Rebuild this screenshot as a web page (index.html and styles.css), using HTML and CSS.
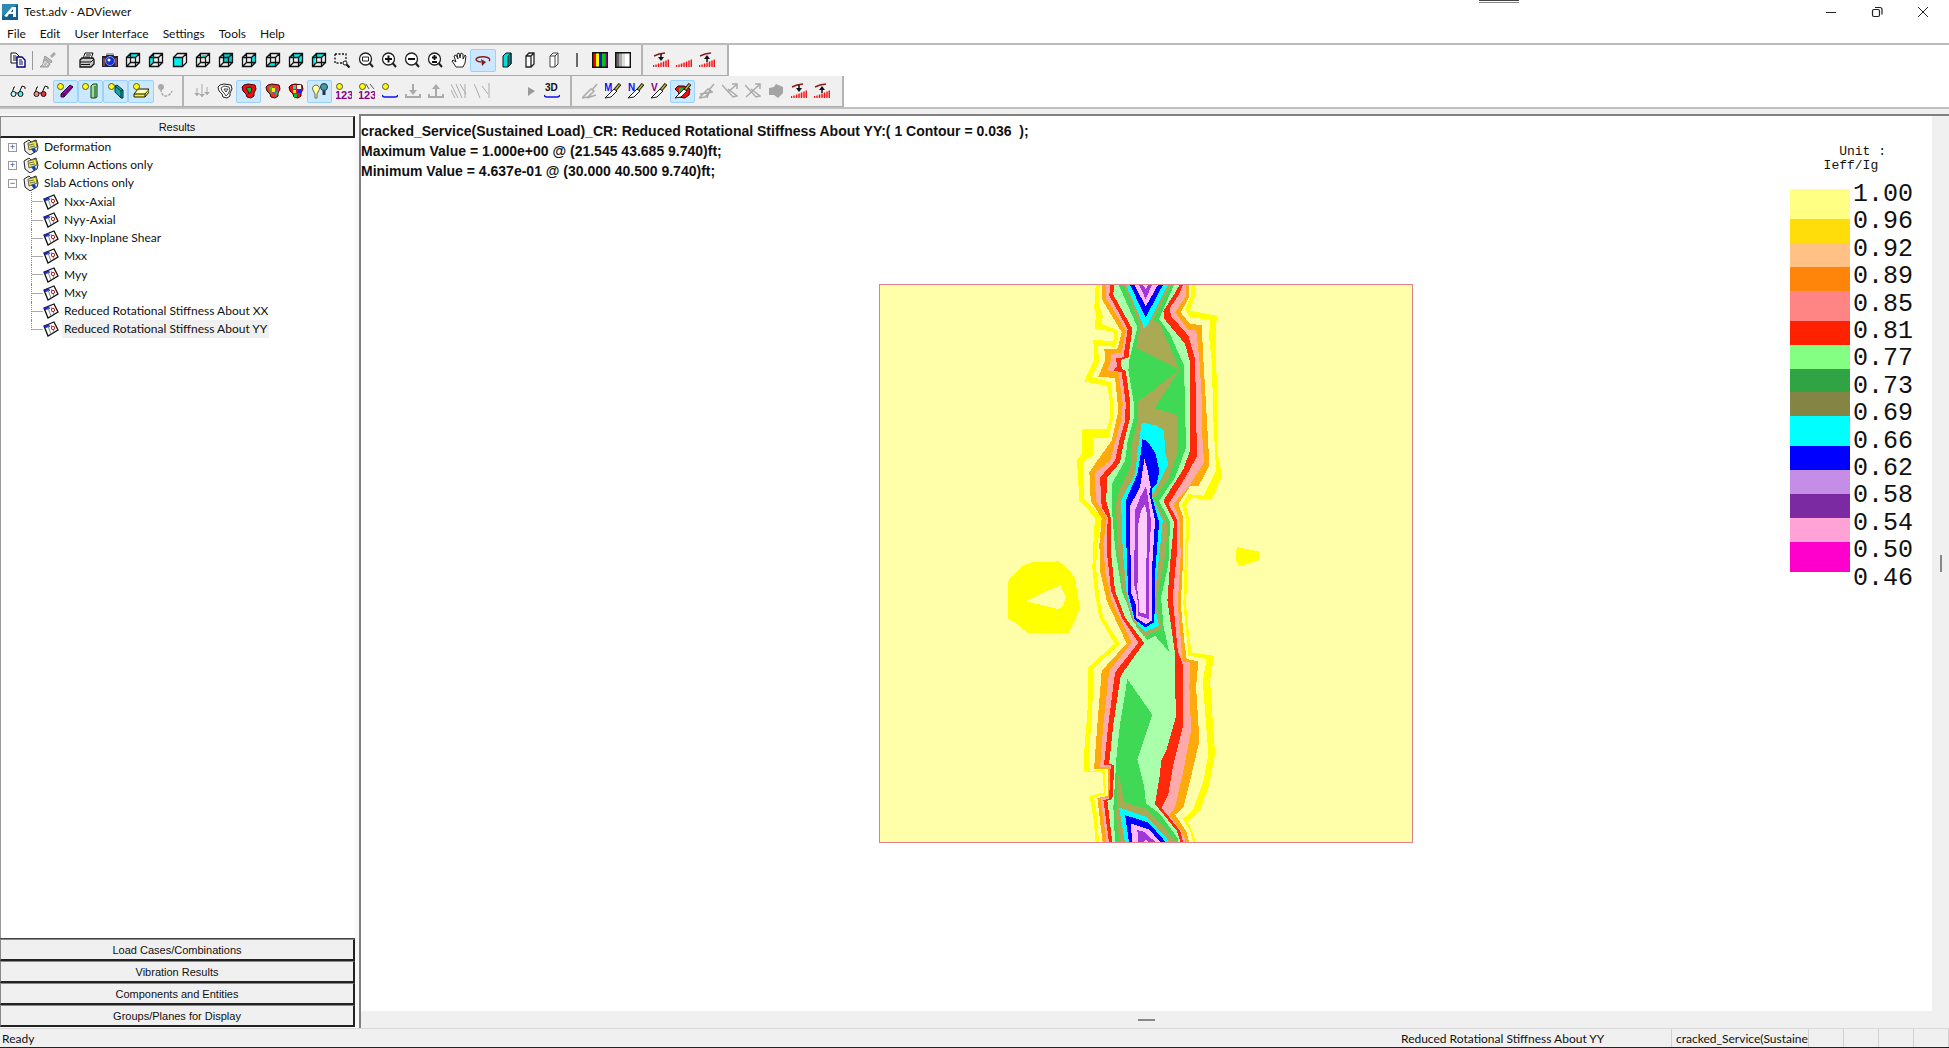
FILE: index.html
```html
<!DOCTYPE html>
<html lang="en">
<head>
<meta charset="utf-8">
<title>Test.adv - ADViewer</title>
<link rel="stylesheet" href="styles.css">
</head>
<body>
<svg class="sprite" aria-hidden="true">
  <symbol id="wire" viewBox="0 0 16 16"><path d="M1.500 5.500h9v9h-9zM5.500 1.500h9v9h-9zM1.500 5.500l4-4M10.500 5.500l4-4M10.500 14.500l4-4M1.500 14.500l4-4" fill="none" stroke="#111" stroke-width="1.300"/></symbol>
  <symbol id="i-copy" viewBox="0 0 16 16"><path d="M1 1h5l3 3v7H1z" fill="#fff" stroke="#111"/><path d="M3 4h3M3 6h4M3 8h4" stroke="#111"/><path d="M7 5h5l3 3v7H7z" fill="#fff" stroke="#00007a" stroke-width="1.400"/><path d="M9 8h3M9 10h4M9 12h4" stroke="#00007a"/></symbol>
  <symbol id="i-brush" viewBox="0 0 16 16"><path d="M15 1l-4 4" stroke="#aaa" stroke-width="3"/><path d="M5 4l7 5-1 2-7-5zM4 7l6 5-2 3H0l3-3z" fill="#bbb" stroke="#999"/><path d="M3 13l3-4M6 14l2-3" stroke="#eee"/></symbol>
  <symbol id="i-print" viewBox="0 0 16 16"><path d="M4 7l2-6h8l-2 6z" fill="#fff" stroke="#111"/><path d="M7 3h5M6 5h5" stroke="#111"/><path d="M1 8l2-2h11l1 2v4l-3 3H1z" fill="#ccc" stroke="#111" stroke-width="1.300"/><path d="M1 10h11l3-3M2 12.500h9" fill="none" stroke="#111"/><path d="M9 11.500h2" stroke="#cc0"/></symbol>
  <symbol id="i-camera" viewBox="0 0 16 16"><path d="M0 4h4l1-3h6l1 3h4v11H0z" fill="#223"/><path d="M5 1h6v2H5z" fill="#aaa"/><path d="M1 6h2v8H1zM13 6h2v8h-2z" fill="#844"/><circle cx="8" cy="9" r="4.500" fill="#1230d0" stroke="#79f"/><circle cx="7" cy="8" r="1.500" fill="#fff"/></symbol>
  <symbol id="i-c1" viewBox="0 0 16 16"><path d="M1 5l4-4h9l-4 4z" fill="#0ee"/><use href="#wire"/></symbol>
  <symbol id="i-c2" viewBox="0 0 16 16"><path d="M1 5l4-4v9l-4 4z" fill="#0ee"/><use href="#wire"/></symbol>
  <symbol id="i-c3" viewBox="0 0 16 16"><path d="M1 5h10v9H1z" fill="#0ee"/><path d="M1.500 5.500h9v9h-9zM1.500 5.500l4-4h9v9l-4 4M10.500 5.500l4-4" fill="none" stroke="#111" stroke-width="1.300"/></symbol>
  <symbol id="i-c4" viewBox="0 0 16 16"><path d="M7 3h4v3H7z" fill="#0ee"/><use href="#wire"/></symbol>
  <symbol id="i-c5" viewBox="0 0 16 16"><path d="M5 1h9v9H5z" fill="#0cc"/><use href="#wire"/></symbol>
  <symbol id="i-c6" viewBox="0 0 16 16"><path d="M11 5l4-4v9l-4 4z" fill="#0ee"/><use href="#wire"/></symbol>
  <symbol id="i-c7" viewBox="0 0 16 16"><path d="M1 14l4-4h9l-4 4z" fill="#0ee"/><use href="#wire"/></symbol>
  <symbol id="i-c8" viewBox="0 0 16 16"><path d="M1 5l4-4h9v9l-4 4V5z" fill="#0ee"/><use href="#wire"/></symbol>
  <symbol id="i-c9" viewBox="0 0 16 16"><path d="M1 5l4-4h9l-4 4zM1 5h3v9H1z" fill="#0ee"/><use href="#wire"/></symbol>
  <symbol id="i-sel" viewBox="0 0 16 16"><path d="M1 2h11v7M1 2v9h7" fill="none" stroke="#111" stroke-width="1.300" stroke-dasharray="2 1.500"/><circle cx="11" cy="11" r="2" fill="#fff" stroke="#111"/><path d="M12.500 12.500l3 3" stroke="#111" stroke-width="2"/></symbol>
  <symbol id="lens" viewBox="0 0 16 16"><circle cx="7.500" cy="7" r="6" fill="#fff" stroke="#222" stroke-width="1.300"/><path d="M11.500 11l3.500 4" stroke="#222" stroke-width="2"/></symbol>
  <symbol id="i-z1" viewBox="0 0 16 16"><use href="#lens"/><path d="M4.500 5h6v4h-6z" fill="#fff" stroke="#222"/></symbol>
  <symbol id="i-z2" viewBox="0 0 16 16"><use href="#lens"/><path d="M4 7h7M7.500 3.500v7" stroke="#111" stroke-width="2"/></symbol>
  <symbol id="i-z3" viewBox="0 0 16 16"><use href="#lens"/><path d="M4 7h7" stroke="#111" stroke-width="2"/></symbol>
  <symbol id="i-z4" viewBox="0 0 16 16"><use href="#lens"/><path d="M5 5.500h5M7.500 3v5M5 10h5" stroke="#111" stroke-width="1.800"/></symbol>
  <symbol id="i-hand" viewBox="0 0 16 16"><path d="M5 15l-4-6 1-1 3 2-2-6 2-1 2 4-1-5 2-1 1 5 1-5 2 1v5l2-4 1 1-1 7-2 4z" fill="#fff" stroke="#222"/></symbol>
  <symbol id="i-rot" viewBox="0 0 16 16"><path d="M14 9c3-3-4-5-9-4s-6 4 1 5" fill="none" stroke="#8b1a1a" stroke-width="1.400"/><path d="M6 7l5 3-4 4z" fill="#8b1a1a"/></symbol>
  <symbol id="i-b1" viewBox="0 0 16 16"><path d="M4 4l3-3h5v11l-3 3H4z" fill="#0dd" stroke="#111"/><path d="M9 4l3-3v11l-3 3z" fill="#088" stroke="#111"/></symbol>
  <symbol id="i-b2" viewBox="0 0 16 16"><path d="M4 4l3-3h5v11l-3 3H4zM4 4h5l3-3M9 4v11" fill="#fff" stroke="#222" stroke-width="1.300"/></symbol>
  <symbol id="i-b3" viewBox="0 0 16 16"><path d="M4 4l3-3h5v11l-3 3H4zM4 4h5l3-3M9 4v11" fill="#fff" stroke="#444"/></symbol>
  <symbol id="i-line" viewBox="0 0 16 16"><path d="M8 1v14" stroke="#222" stroke-width="1.300"/></symbol>
  <symbol id="i-bars" viewBox="0 0 16 16"><path d="M1 1h14v14H1z" fill="#ff0"/><path d="M1 1h3v14H1z" fill="#f00"/><path d="M7 1h3v14H7z" fill="#11f"/><path d="M10 1h3v14h-3z" fill="#0c0"/><path d="M13 1h2v14h-2z" fill="#e0e"/><path d="M.7.7h14.600v14.600H.7z" fill="none" stroke="#111" stroke-width="1.400"/></symbol>
  <symbol id="i-grays" viewBox="0 0 16 16"><path d="M1 1h14v14H1z" fill="#fff"/><path d="M1 1h3v14H1z" fill="#666"/><path d="M4 1h3v14H4z" fill="#aaa"/><path d="M7 1h3v14H7z" fill="#ddd"/><path d="M.7.700h14.600v14.600H.7z" fill="none" stroke="#111" stroke-width="1.400"/></symbol>
  <symbol id="ramp" viewBox="0 0 16 16"><path d="M0 14.500h16V7.500z" fill="#fbb"/><path d="M.5 13v2M3 12.500v2.500M5.500 11.500V15M8 10.500V15M10.500 9.500V15M13 8.500V15M15.300 7.500V15" stroke="#e11" stroke-width="1.300"/></symbol>
  <symbol id="i-r1" viewBox="0 0 16 16"><use href="#ramp"/><path d="M1 4l5-2 6-1" fill="none" stroke="#8b1a1a" stroke-width="1.500"/><path d="M8 2v4" stroke="#111" stroke-width="1.500"/><path d="M5 5h6L8 9z" fill="#111"/></symbol>
  <symbol id="i-r2" viewBox="0 0 16 16"><use href="#ramp"/></symbol>
  <symbol id="i-r3" viewBox="0 0 16 16"><use href="#ramp"/><path d="M1 4l5-2 6-1" fill="none" stroke="#8b1a1a" stroke-width="1.500"/><path d="M8 6v4" stroke="#111" stroke-width="1.500"/><path d="M5 7h6L8 3z" fill="#111"/></symbol>
  <symbol id="i-g1" viewBox="0 0 16 16"><path d="M2 10l2-6h1M9 10l3-7 3 1v2M6 10h3" fill="none" stroke="#111"/><circle cx="3.500" cy="11" r="2.500" fill="#bff" stroke="#111"/><circle cx="10.500" cy="11" r="2.500" fill="#5ee" stroke="#111"/></symbol>
  <symbol id="i-g2" viewBox="0 0 16 16"><path d="M2 10l2-6h1M9 10l3-7 3 1v2M6 10h3" fill="none" stroke="#111"/><circle cx="3.500" cy="11" r="2.500" fill="#f88" stroke="#111"/><circle cx="10.500" cy="11" r="2.500" fill="#e33" stroke="#111"/></symbol>
  <symbol id="dot" viewBox="0 0 16 16"><circle cx="3.500" cy="3.500" r="3" fill="#ff0" stroke="#554"/></symbol>
  <symbol id="i-e1" viewBox="0 0 16 16"><path d="M4 11l9-9 3 2-9 10H4z" fill="#a0c" stroke="#212"/><path d="M7 11v3M4 11h3l9-8" fill="none" stroke="#212"/><use href="#dot"/></symbol>
  <symbol id="i-e2" viewBox="0 0 16 16"><path d="M9 3l2-2h4v13l-2 1H9z" fill="#9d9" stroke="#141"/><path d="M13 3v12" stroke="#141"/><use href="#dot"/></symbol>
  <symbol id="i-e3" viewBox="0 0 16 16"><path d="M7 3l2-1 6 5v8l-2 0-6-6z" fill="#1aa" stroke="#033"/><path d="M13 8v7M7 3l6 5 2-1" fill="none" stroke="#033"/><use href="#dot"/></symbol>
  <symbol id="i-e4" viewBox="0 0 16 16"><path d="M1 11l4-5h11v3l-4 5H1z" fill="#ee4" stroke="#220"/><path d="M1 11h11l4-5M12 11v3" fill="none" stroke="#220"/><path d="M5 7h10l-3 3H3z" fill="#ffb"/><use href="#dot"/></symbol>
  <symbol id="i-e5" viewBox="0 0 16 16"><circle cx="4" cy="4" r="3" fill="#aaa"/><path d="M4 6c0 10 9 8 11 2" fill="none" stroke="#aaa" stroke-width="1.500" stroke-dasharray="3 1"/></symbol>
  <symbol id="i-down3" viewBox="0 0 16 16"><path d="M3 5v8M8 1v13M13 4v8" stroke="#aaa"/><path d="M0 10h6l-3 3zM5 11h6l-3 3zM10 9h6l-3 3z" fill="#aaa"/></symbol>
  <symbol id="i-k1" viewBox="0 0 16 16"><path d="M1 4l2-2 4-1 7 1 1 4-2 4v3l-3 2-4-1-1-3-3-3z" fill="#fff" stroke="#222"/><path d="M4 5l3-2 5 1 1 3-2 4-2 2-2-3-2-2zM7 6h4l-2 3z" fill="none" stroke="#444"/></symbol>
  <symbol id="i-k2" viewBox="0 0 16 16"><path d="M1 4l2-2 4-1 7 1 1 4-2 4v3l-3 2-4-1-1-3-3-3z" fill="#e11" stroke="#400"/><path d="M5 5l5-1 1 3-3 4-1-3z" fill="#1b3" stroke="#222"/></symbol>
  <symbol id="i-k3" viewBox="0 0 16 16"><path d="M1 4l2-2 4-1 7 1 1 4-2 4v3l-3 2-4-1-1-3-3-3z" fill="#e33" stroke="#400"/><path d="M4 4l3-1 2 4-3 4zM10 10l3-2-1 5z" fill="#2c3"/><path d="M8 4l5 2-4 5-2-3z" fill="#36f"/><path d="M7 5h3v4H7z" fill="#fe0"/></symbol>
  <symbol id="i-k4" viewBox="0 0 16 16"><path d="M1 4l2-2 4-1 7 1 1 4-2 4v3l-3 2-4-1-1-3-3-3z" fill="#e11" stroke="#400"/><path d="M5 2h3v4H5z" fill="#0dd"/><path d="M9 2h4v4H9z" fill="#fff"/><path d="M5 7h3v3H5z" fill="#fe0"/><path d="M9 6h4v4H9z" fill="#22e"/><path d="M6 11h3v3H6z" fill="#1b3"/></symbol>
  <symbol id="i-bulbs" viewBox="0 0 16 16"><circle cx="12" cy="4" r="3.500" fill="#49a" stroke="#234"/><path d="M12 7.500V12" stroke="#234" stroke-width="3"/><path d="M.500 6a3.500 3.500 0 1 1 6 2L5 11v4H3v-4z" fill="#ff9" stroke="#665"/></symbol>
  <symbol id="i-n1" viewBox="0 0 16 16"><text x="-1" y="16" font-size="11" fill="#808">123</text><use href="#dot"/></symbol>
  <symbol id="i-n2" viewBox="0 0 16 16"><text x="-1" y="16" font-size="11" fill="#808">123</text><path d="M7 1l3 5M11 1l4 5" stroke="#555"/><use href="#dot"/></symbol>
  <symbol id="i-arc" viewBox="0 0 16 16"><path d="M0 12q1 2 3 2h10q2 0 3-2" fill="none" stroke="#11e" stroke-width="1.500"/><use href="#dot"/></symbol>
  <symbol id="i-dn" viewBox="0 0 16 16"><path d="M8 1v7M1 11v3h14v-3" fill="none" stroke="#aaa" stroke-width="2"/><path d="M4 7h8l-4 5z" fill="#aaa"/></symbol>
  <symbol id="i-up" viewBox="0 0 16 16"><path d="M8 5v8M1 11v3h14v-3" fill="none" stroke="#aaa" stroke-width="2"/><path d="M4 6h8L8 1z" fill="#aaa"/></symbol>
  <symbol id="i-h1" viewBox="0 0 16 16"><path d="M0 1l7 14M5 1l6 14M9 1l6 10M14 1v14M0 7l4 8" fill="none" stroke="#aaa"/></symbol>
  <symbol id="i-h2" viewBox="0 0 16 16"><path d="M0 1l2 4 4 10M8 3l6 8M15 0v15" fill="none" stroke="#aaa"/></symbol>
  <symbol id="i-play" viewBox="0 0 16 16"><path d="M5 4l7 4-7 5z" fill="#999"/></symbol>
  <symbol id="i-3d" viewBox="0 0 16 16"><text x="1" y="8" font-size="10" fill="#111">3D</text><path d="M0 12q1 2 3 2h10q2 0 3-2" fill="none" stroke="#11e" stroke-width="1.500"/></symbol>
  <symbol id="knife" viewBox="0 0 16 16"><path d="M0 15l9-9 3 2-6 6z" fill="#fff" stroke="#222"/><path d="M10 7l5-6" stroke="#222" stroke-width="3.500"/><path d="M10.500 6.500l4-5" stroke="#cb2" stroke-width="1.300"/></symbol>
  <symbol id="i-s0" viewBox="0 0 16 16"><path d="M0 15l9-9 3 2-6 6zM10 7l5-6M5 15l9-3" fill="none" stroke="#aaa" stroke-width="1.500"/></symbol>
  <symbol id="i-sm" viewBox="0 0 16 16"><use href="#knife"/><text x="-1" y="8" font-size="10" fill="#11e">M</text></symbol>
  <symbol id="i-sn" viewBox="0 0 16 16"><use href="#knife"/><text x="0" y="8" font-size="10" fill="#11e">N</text></symbol>
  <symbol id="i-sv" viewBox="0 0 16 16"><use href="#knife"/><text x="0" y="8" font-size="10" fill="#808">V</text></symbol>
  <symbol id="i-sc" viewBox="0 0 16 16"><path d="M0 6l3-3h6l6 3-1 6-4 3-7-1 1-4z" fill="#e11" stroke="#300"/><path d="M4 5h4v6H4z" fill="#1b3"/><use href="#knife"/></symbol>
  <symbol id="i-s1" viewBox="0 0 16 16"><path d="M0 15l9-9 3 2-6 6zM10 7l5-6M1 11l13-2M8 15l3-9" fill="none" stroke="#aaa" stroke-width="1.500"/></symbol>
  <symbol id="i-s2" viewBox="0 0 16 16"><path d="M0 2l11 12 4-1-9-7M6 9l8-7M10 1h5v5" fill="none" stroke="#aaa" stroke-width="1.500"/></symbol>
  <symbol id="i-s3" viewBox="0 0 16 16"><path d="M0 2l11 12 4-1-9-7M1 14L14 2M10 1h5v5" fill="none" stroke="#aaa" stroke-width="1.500"/></symbol>
  <symbol id="i-s4" viewBox="0 0 16 16"><path d="M1 5l5-1 2-3 7 3v6l-5 5-4-3H1z" fill="#a4a4a4"/></symbol>
  <symbol id="i-book" viewBox="0 0 16 16"><path d="M1 4l5-3 2 2 5-2 2 7-1 4-7 4-5-4z" fill="#eee" stroke="#222"/><path d="M5 4l8-2 1 6-8 3z" fill="#ee3" stroke="#665"/><path d="M6 6l5-1M7 8l5-1" stroke="#775"/><path d="M8 10l4-1 1 3-2 2z" fill="#14a"/></symbol>
  <symbol id="i-leaf" viewBox="0 0 16 16"><path d="M1 5l10-4 4 8-10 6z" fill="#fff" stroke="#111" stroke-width="1.300"/><path d="M1 5l5-2 1 3-5 1z" fill="#22d"/><path d="M5 5l3 8M8 4l3 7" stroke="#888"/><circle cx="10" cy="7" r="1.700" fill="#fff" stroke="#b22"/></symbol>
</svg>

<div class="app">
  <header class="titlebar">
    <svg class="logo" viewBox="0 0 16 16"><path d="M0 0h16v16H0z" fill="#12608e"/><path d="M0 0h16L0 12z" fill="#2d8ab5"/><path d="M2 12L10 3h4v10h-3v-3H7l-2 3zM9 8h2V5z" fill="#fff" fill-rule="evenodd"/></svg>
    <h1>Test.adv - ADViewer</h1>
    <div class="grip"></div>
    <div class="winbtns">
      <button aria-label="Minimize"><svg viewBox="0 0 12 12"><path d="M1 6.500h10" stroke="#222"/></svg></button>
      <button aria-label="Restore"><svg viewBox="0 0 12 12"><rect x="1.500" y="3.500" width="7" height="7" rx="1.500" fill="none" stroke="#222" stroke-width="1.200"/><path d="M4 1.500h5q2 0 2 2v5" fill="none" stroke="#222" stroke-width="1.200"/></svg></button>
      <button aria-label="Close"><svg viewBox="0 0 12 12"><path d="M1 1l10 10M11 1L1 11" stroke="#222"/></svg></button>
    </div>
  </header>
  <nav class="menubar">
    <button>File</button><button>Edit</button><button>User Interface</button><button>Settings</button><button>Tools</button><button>Help</button>
  </nav>

  <div class="toolrow">
    <div class="band edit">
      <button aria-label="Copy"><svg><use href="#i-copy"/></svg></button><span class="sep"></span>
      <button aria-label="Format painter"><svg><use href="#i-brush"/></svg></button>
    </div>
    <div class="band camera">
      <button aria-label="Print"><svg><use href="#i-print"/></svg></button>
      <button aria-label="Snapshot"><svg><use href="#i-camera"/></svg></button>
      <button aria-label="Top view"><svg><use href="#i-c1"/></svg></button>
      <button aria-label="Left view"><svg><use href="#i-c2"/></svg></button>
      <button aria-label="Front view"><svg><use href="#i-c3"/></svg></button>
      <button aria-label="Isometric view"><svg><use href="#i-c4"/></svg></button>
      <button aria-label="Back view"><svg><use href="#i-c5"/></svg></button>
      <button aria-label="Right view"><svg><use href="#i-c6"/></svg></button>
      <button aria-label="Bottom view"><svg><use href="#i-c7"/></svg></button>
      <button aria-label="Top right view"><svg><use href="#i-c8"/></svg></button>
      <button aria-label="Top left view"><svg><use href="#i-c9"/></svg></button>
      <button aria-label="Select area"><svg><use href="#i-sel"/></svg></button>
      <button aria-label="Zoom window"><svg><use href="#i-z1"/></svg></button>
      <button aria-label="Zoom in"><svg><use href="#i-z2"/></svg></button>
      <button aria-label="Zoom out"><svg><use href="#i-z3"/></svg></button>
      <button aria-label="Zoom extents"><svg><use href="#i-z4"/></svg></button>
      <button aria-label="Pan"><svg><use href="#i-hand"/></svg></button>
      <button aria-label="Rotate" class="on"><svg><use href="#i-rot"/></svg></button>
      <button aria-label="Solid"><svg><use href="#i-b1"/></svg></button>
      <button aria-label="Hidden line"><svg><use href="#i-b2"/></svg></button>
      <button aria-label="Wireframe"><svg><use href="#i-b3"/></svg></button>
      <button aria-label="Line"><svg><use href="#i-line"/></svg></button>
      <button aria-label="Color"><svg><use href="#i-bars"/></svg></button>
      <button aria-label="Grayscale"><svg><use href="#i-grays"/></svg></button>
    </div>
    <div class="band scale">
      <button aria-label="Scale down"><svg><use href="#i-r1"/></svg></button>
      <button aria-label="Scale"><svg><use href="#i-r2"/></svg></button>
      <button aria-label="Scale up"><svg><use href="#i-r3"/></svg></button>
    </div>
  </div>

  <div class="toolrow second">
    <div class="band entities">
      <button aria-label="View"><svg><use href="#i-g1"/></svg></button>
      <button aria-label="Hide"><svg><use href="#i-g2"/></svg></button>
      <button aria-label="Beams" class="on"><svg><use href="#i-e1"/></svg></button>
      <button aria-label="Columns" class="on"><svg><use href="#i-e2"/></svg></button>
      <button aria-label="Walls" class="on"><svg><use href="#i-e3"/></svg></button>
      <button aria-label="Slabs" class="on"><svg><use href="#i-e4"/></svg></button>
      <button aria-label="Tendons"><svg><use href="#i-e5"/></svg></button>
    </div>
    <div class="band results">
      <button aria-label="Loads"><svg><use href="#i-down3"/></svg></button>
      <button aria-label="Contour lines"><svg><use href="#i-k1"/></svg></button>
      <button aria-label="Contour fill" class="on"><svg><use href="#i-k2"/></svg></button>
      <button aria-label="Contour shade"><svg><use href="#i-k3"/></svg></button>
      <button aria-label="Contour mosaic"><svg><use href="#i-k4"/></svg></button>
      <button aria-label="Lighting" class="on"><svg><use href="#i-bulbs"/></svg></button>
      <button aria-label="Values"><svg><use href="#i-n1"/></svg></button>
      <button aria-label="Line values"><svg><use href="#i-n2"/></svg></button>
      <button aria-label="Curve"><svg><use href="#i-arc"/></svg></button>
      <button aria-label="Minimum"><svg><use href="#i-dn"/></svg></button>
      <button aria-label="Maximum"><svg><use href="#i-up"/></svg></button>
      <button aria-label="Hatch"><svg><use href="#i-h1"/></svg></button>
      <button aria-label="Hatch off"><svg><use href="#i-h2"/></svg></button>
    </div>
    <div class="band play">
      <button aria-label="Play"><svg><use href="#i-play"/></svg></button>
      <button aria-label="3D"><svg><use href="#i-3d"/></svg></button>
    </div>
    <div class="band cuts">
      <button aria-label="Cut"><svg><use href="#i-s0"/></svg></button>
      <button aria-label="Moment"><svg><use href="#i-sm"/></svg></button>
      <button aria-label="Axial"><svg><use href="#i-sn"/></svg></button>
      <button aria-label="Shear"><svg><use href="#i-sv"/></svg></button>
      <button aria-label="Contour cut" class="on"><svg><use href="#i-sc"/></svg></button>
      <button aria-label="Cut lines"><svg><use href="#i-s1"/></svg></button>
      <button aria-label="Cut arrow"><svg><use href="#i-s2"/></svg></button>
      <button aria-label="Delete cut"><svg><use href="#i-s3"/></svg></button>
      <button aria-label="Solid cut"><svg><use href="#i-s4"/></svg></button>
      <button aria-label="Decrease"><svg><use href="#i-r1"/></svg></button>
      <button aria-label="Increase"><svg><use href="#i-r3"/></svg></button>
    </div>
  </div>

  <main class="work">
    <aside class="side">
      <button class="section">Results</button>
      <ul class="tree">
        <li class="group"><span class="box">+</span><svg><use href="#i-book"/></svg><a href="#">Deformation</a></li>
        <li class="group"><span class="box">+</span><svg><use href="#i-book"/></svg><a href="#">Column Actions only</a></li>
        <li class="group"><span class="box">−</span><svg><use href="#i-book"/></svg><a href="#">Slab Actions only</a></li>
        <li class="leaf"><svg><use href="#i-leaf"/></svg><a href="#">Nxx-Axial</a></li>
        <li class="leaf"><svg><use href="#i-leaf"/></svg><a href="#">Nyy-Axial</a></li>
        <li class="leaf"><svg><use href="#i-leaf"/></svg><a href="#">Nxy-Inplane Shear</a></li>
        <li class="leaf"><svg><use href="#i-leaf"/></svg><a href="#">Mxx</a></li>
        <li class="leaf"><svg><use href="#i-leaf"/></svg><a href="#">Myy</a></li>
        <li class="leaf"><svg><use href="#i-leaf"/></svg><a href="#">Mxy</a></li>
        <li class="leaf"><svg><use href="#i-leaf"/></svg><a href="#">Reduced Rotational Stiffness About XX</a></li>
        <li class="leaf last"><svg><use href="#i-leaf"/></svg><a href="#" class="picked">Reduced Rotational Stiffness About YY</a></li>
      </ul>
      <div class="sections">
        <button class="section">Load Cases/Combinations</button>
        <button class="section">Vibration Results</button>
        <button class="section">Components and Entities</button>
        <button class="section">Groups/Planes for Display</button>
      </div>
    </aside>

    <section class="view">
      <div class="canvas">
        <div class="readout">
          <p>cracked_Service(Sustained Load)_CR: Reduced Rotational Stiffness About YY:( 1 Contour = 0.036&nbsp; );</p>
          <p>Maximum Value = 1.000e+00 @ (21.545 43.685 9.740)ft;</p>
          <p>Minimum Value = 4.637e-01 @ (30.000 40.500 9.740)ft;</p>
        </div>
        <svg class="plot" viewBox="-543 40 1602 1677" shape-rendering="crispEdges" role="img" aria-label="Stiffness contours">
          <path fill="#ffffaa" d="M-543 40H1059V1717H-543z"/>
          <path fill="#ffff00" d="M-85 875L-3 872 20 892 45 920 60 1015 25 1088-5 1088-96 1088-137 1054-156 1043V931L-115 887z"/>
          <path fill="#ffffaa" d="M-104 991L1 943 17 978 10 1005-5 1015z"/>
          <path fill="#ffff00" d="M530 829L597 842V868L538 887 526 864z"/>
          <path fill="#ffff00" d="M107 40L105 85 102 115 108 130 104 175 155 182 162 192 160 212 98 207 101 222V270L72 333 142 345 150 400V440L140 474H67V545L51 570 58 690 105 740 100 820 97 890 105 970 118 1040 163 1119 85 1190 83 1310 72 1450V1505H127L132 1565 88 1575 100 1640 107 1717H408L400 1690 382 1653 420 1620 445 1550 465 1450 450 1230 462 1155 395 1145 388 1100 378 1000 388 745 378 705 395 682 455 687 486 615 470 530 472 430 467 200 470 135 390 120 403 85 407 40z"/>
          <path fill="#ffffaa" d="M119 40L116 100 128 135 126 160 172 178 175 200 165 228 112 225 118 270 97 318 152 335 160 400V440L145 503H98V555L68 575 72 685 128 740 112 820 108 890 118 980 130 1040 180 1118 100 1195 97 1310 87 1450V1500L135 1498 138 1570 102 1580 112 1640 117 1717H400L390 1680 368 1645 400 1615 430 1530 445 1450 428 1230 440 1165 385 1155 370 1000 378 750 365 700 385 670 430 675 468 600 460 450 455 270 447 200 450 147 390 140 375 115 393 75 395 40z"/>
          <path fill="#ffaa0c" d="M127 40L125 85 185 185 172 235H133L135 270 115 318 165 322 175 420 155 510 110 572 88 605 92 690 125 742 118 820 120 900 140 990 200 1118 125 1200 112 1360 102 1495H143L145 1575 112 1582 128 1717H388L378 1680 345 1632 370 1610 390 1530 418 1410 408 1250 415 1172 380 1165 373 1115 362 1000 370 850 368 735 355 700 390 647H415L448 585 440 440 430 270 425 163 390 160 362 125 387 80V40z"/>
          <path fill="#ffaaaa" d="M137 40V80L198 180 185 245 155 250 150 280 140 298 175 305 188 400 183 450 150 570 105 605 107 690 140 740 130 820 135 900 155 990 215 1115 148 1200 130 1360 120 1490H150L147 1580 122 1582 140 1717H377L370 1690 327 1632 345 1610 370 1500 393 1380 388 1250 390 1175 368 1172 365 1140 353 1000 362 850 358 745 340 700 385 650 432 575 427 500 425 380 418 270 408 178H385L375 165 345 125 378 75V40z"/>
          <path fill="#ff2a0c" d="M150 40L148 75 203 175 190 260 167 262 172 285 160 300 185 305 197 400 195 450 178 510 165 570 120 620 125 710 143 740 140 840 153 960 185 1040 235 1116 165 1205 145 1360 132 1482H152L147 1585 130 1587 147 1717H370L360 1680 305 1612 325 1570 340 1480 370 1360V1187L353 1140 338 980 350 850V745L325 700 370 630 412 555 410 520 405 265 385 195 332 135 330 110 355 75 370 40z"/>
          <path fill="#aaffaa" d="M162 40L160 72 217 175 205 260 182 268 185 295 197 300 210 390V440L190 520 180 575 142 620 138 690 152 740 153 850 165 960 195 1040 252 1116 182 1215 160 1360 147 1480 163 1482 157 1585 142 1590 157 1717H362L350 1680 285 1600 300 1510 303 1470 320 1435 347 1340 345 1180V1150L322 990 330 880 342 755 310 690 370 595 390 540V275L375 220 313 145 310 120 340 75 360 40z"/>
          <path fill="#40d955" d="M175 40L232 170 208 265 205 300 222 400V440L203 510 195 570 155 640V710L165 830 185 960 230 1070 262 1107 285 1095 327 1143 310 1065 303 980 325 880 330 755 297 690 345 620 378 530 375 420 372 285 330 190 297 145 343 40zM202 1225L277 1332 232 1465 252 1545 258 1598 300 1630 355 1705V1717H165L160 1610 168 1482 170 1450 180 1360z"/>
          <path fill="#aaaa55" d="M190 40L240 165 228 232 358 297 232 395 235 440 215 520 212 585 178 660 168 700 172 830 185 940 215 1045 252 1097 305 1075 290 990 300 930 318 840 322 755 282 685 325 625 352 550 350 432 283 413 358 297 300 160 280 150 335 40zM175 1510L193 1595 260 1615 355 1717H180L168 1640z"/>
          <path fill="#00ffff" d="M197 40L250 165V173L262 165 268 150 325 40zM245 455L290 465 312 480 315 545 325 580 303 625 275 675 308 750 300 830 288 940 285 1010 297 1065 255 1083 220 1045 200 970 188 840 183 690 225 610 232 550zM177 1610L262 1640 332 1717H195z"/>
          <path fill="#0000ff" d="M208 40L257 140 310 40zM247 505L262 512 285 545 298 600 290 640 275 655V675L297 755 285 910 283 1055 255 1070 223 1045 205 970 200 870 197 690 232 610 242 550zM195 1633L265 1655 320 1717H207z"/>
          <path fill="#ffb8ff" d="M222 40L257 108 295 40zM253 565L263 600 272 650 268 670 285 750 275 910V1050L257 1060 227 1040V1000L213 965 210 760V705L240 650zM212 1658L265 1675 305 1717H217z"/>
          <path fill="#a038d9" d="M235 40L257 85 277 40zM258 645L265 690 273 750 267 870V1045L235 1035 232 980 222 940 225 720 240 680zM232 1678L250 1682 290 1717H235z"/>
          <path fill="#ffccff" d="M247 40L257 55 267 40zM255 700L262 740V850L257 870V1030L238 1025 235 980 232 960 235 760 243 720zM258 1705L268 1717H247z"/>
          <path fill="none" stroke="#e0808c" stroke-width="3" d="M-541.500 41.500H1057.500V1715.500H-541.500z"/>
        </svg>
        <div class="legend">
          <p class="unit">Unit :<br>Ieff/Ig&nbsp;</p>
          <div class="scalebar">
            <div class="swatches">
              <i class="c1 tall"></i><i class="c2"></i><i class="c3"></i><i class="c4"></i><i class="c5 tall"></i><i class="c6"></i><i class="c7"></i><i class="c8"></i><i class="c9"></i><i class="c10 tall"></i><i class="c11"></i><i class="c12"></i><i class="c13"></i><i class="c14"></i><i class="c15 tall"></i>
            </div>
            <ol class="values">
              <li>1.00</li><li>0.96</li><li>0.92</li><li>0.89</li><li>0.85</li><li>0.81</li><li>0.77</li><li>0.73</li><li>0.69</li><li>0.66</li><li>0.62</li><li>0.58</li><li>0.54</li><li>0.50</li><li>0.46</li>
            </ol>
          </div>
        </div>
      </div>
      <div class="vgutter"><span></span></div>
      <div class="hgutter"><span></span></div>
    </section>
  </main>

  <footer class="status">
    <span class="ready">Ready</span>
    <span class="result">Reduced Rotational Stiffness About YY</span>
    <span class="case">cracked_Service(Sustaine</span>
    <span class="pane"></span><span class="pane"></span><span class="pane"></span><span class="pane"></span>
  </footer>
</div>
</body>
</html>
```
FILE: styles.css
```css
* { box-sizing: border-box; }
body {
  margin: 0;
  background: #fff;
  color: #111;
  font: 12px/16px Lato, "Open Sans", sans-serif;
}
button {
  margin: 0;
  padding: 0;
  border: 0;
  background: none;
  color: inherit;
  font: inherit;
}
p, ul, ol { margin: 0; padding: 0; list-style: none; }
a { color: inherit; text-decoration: none; }
.sprite { display: none; }
.sprite text { font-family: "Liberation Sans", Arial, sans-serif; font-weight: 700; }

.app {
  display: flex;
  flex-direction: column;
  min-height: 100vh;
  background: #fff;
  border-bottom: 1px solid #222;
}

/* Title and menu */
.titlebar {
  display: flex;
  align-items: center;
  height: 23px;
  padding: 0 3px 0 2px;
}
.logo { width: 16px; height: 16px; }
.titlebar h1 { margin: 0 0 0 6px; font-size: 12px; font-weight: 400; }
.grip {
  align-self: flex-start;
  width: 40px;
  height: 3px;
  margin-left: auto;
  border-top: 1px solid #444;
  border-bottom: 1px solid #888;
}
.winbtns { display: flex; margin-left: 289px; }
.winbtns button { width: 46px; height: 22px; display: grid; place-items: center; }
.winbtns svg { width: 12px; height: 12px; }
.menubar {
  display: flex;
  gap: 14px;
  height: 22px;
  padding: 3px 7px 0;
  border-bottom: 2px solid #bbb;
}
.menubar button { height: 16px; }

/* Toolbars */
.toolrow { display: flex; height: 31px; }
.toolrow.second { border-bottom: 2px solid #c0c0c0; height: 33px; }
.band {
  display: flex;
  align-items: center;
  height: 31px;
  padding: 1px 8px 1px 6px;
  background: #f0f0f0;
  border-right: 2px solid #b4b4b4;
  border-bottom: 1px solid #aaa;
}
.band button {
  flex: 1;
  height: 23px;
  display: grid;
  place-items: center;
}
.band svg { width: 16px; height: 16px; overflow: visible; }
.band .on { background: #cce8ff; border: 1px solid #99d1ff; border-radius: 2px; }
.edit { width: 69px; }
.sep { width: 1px; height: 19px; margin: 0 3px; background: #999; }
.camera { width: 574px; padding: 1px 6px; }
.scale { width: 86px; }
.entities { width: 184px; padding-right: 5px; }
.results { width: 310px; padding-right: 0; border-right: 0; }
.play { width: 78px; padding: 1px 8px 1px 26px; }
.cuts { width: 272px; }

/* Work area */
.work { flex: 1; display: flex; padding-top: 5px; background: #f0f0f0; }
.side {
  width: 359px;
  display: flex;
  flex-direction: column;
  padding: 2px 4px 1px 0;
  background: #f8f8f8;
}
.section {
  height: 22px;
  border: 1px solid #888;
  border-right: 2px solid #222;
  border-bottom: 2px solid #222;
  background: #f0f0f0;
  font: 11px/16px "Liberation Sans", Arial, sans-serif;
}
.sections { display: flex; flex-direction: column; border-top: 1px solid #444; }
.tree {
  flex: 1;
  display: grid;
  align-content: start;
  grid-auto-rows: 18px 18px 18px 19px;
  padding-left: 7px;
  border-left: 1px solid #999;
  background: #fff;
}
.tree li { display: flex; align-items: center; }
.tree svg { width: 16px; height: 16px; margin-right: 3px; }
.tree a { padding: 1px 2px; }
.picked { background: #f0f0f0; }
.box {
  display: grid;
  place-items: center;
  width: 9px;
  height: 9px;
  margin-right: 6px;
  border: 1px solid #999;
  color: #24a;
  font: 9px/7px "Liberation Sans", Arial, sans-serif;
}
.leaf::before {
  content: "";
  align-self: stretch;
  width: 11px;
  margin-left: 23px;
  border-left: 1px dotted #888;
  background: linear-gradient(#aaa, #aaa) 0 9px / 100% 1px no-repeat;
}
.leaf.last::before { align-self: flex-start; height: 10px; }

.view {
  flex: 1;
  min-width: 0;
  display: grid;
  grid-template: 1fr 17px / 1fr 17px;
  border-top: 2px solid #808080;
  border-left: 2px solid #808080;
  background: #f0f0f0;
}
.canvas { display: grid; background: #fff; }
.canvas > * { grid-area: 1 / 1; }
.readout {
  place-self: start;
  padding-top: 5px;
  font: 700 14px/20px "Liberation Sans", Arial, sans-serif;
}
.plot { place-self: center; width: 34%; }
.legend { place-self: start end; width: 160px; padding-top: 29px; }
.unit {
  margin-right: 46px;
  text-align: right;
  font: 13px/14px "Liberation Mono", "Courier New", monospace;
}
.scalebar { display: flex; gap: 3px; padding: 6px 0 0 18px; }
.swatches { width: 60px; height: 383px; margin-top: 10px; display: flex; flex-direction: column; }
.swatches i { flex: 24; }
.swatches .tall { flex: 30; }
.c1 { background: #ffff84; } .c2 { background: #ffdd0a; } .c3 { background: #ffc284; }
.c4 { background: #ff840a; } .c5 { background: #ff8484; } .c6 { background: #ff2200; }
.c7 { background: #84ff84; } .c8 { background: #30a344; } .c9 { background: #848444; }
.c10 { background: #00ffff; } .c11 { background: #0000ff; } .c12 { background: #c48ee6; }
.c13 { background: #7b2aa2; } .c14 { background: #ffa2d6; } .c15 { background: #ff00cc; }
.values {
  height: 413px;
  padding-top: 2px;
  display: flex;
  flex-direction: column;
  font: 25px/27px "Liberation Mono", "Courier New", monospace;
}
.values li { flex: 1; }
.vgutter { display: grid; align-items: center; justify-content: center; }
.vgutter span { width: 2px; height: 17px; background: #888; }
.hgutter { display: grid; place-items: center; }
.hgutter span { width: 17px; height: 2px; background: #888; }

/* Status bar */
.status {
  display: flex;
  height: 19px;
  border-top: 1px solid #d8d8d8;
  background: #f0f0f0;
  line-height: 20px;
}
.ready { flex: 1; padding-left: 2px; }
.result { width: 271px; }
.case { width: 137px; padding-left: 4px; white-space: nowrap; }
.result, .case, .pane { border-right: 1px solid #d0d0d0; }
.pane { width: 35px; }
```
